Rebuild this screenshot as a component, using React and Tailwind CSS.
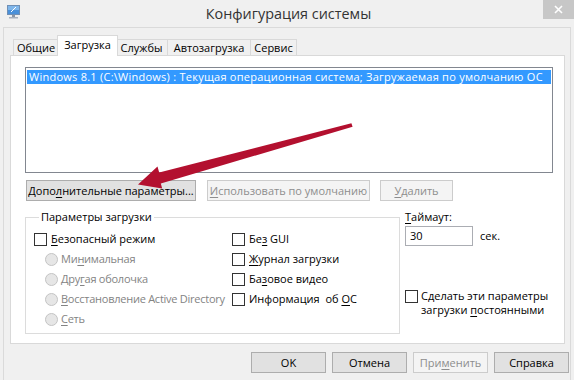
import React from "react";

const U = ({ children }) => (
  <span className="underline decoration-1 underline-offset-[2px]">{children}</span>
);

function MonitorIcon() {
  return (
    <svg width="15" height="15" viewBox="0 0 15 15">
      <rect x="1" y="1" width="13" height="10" fill="#6f8fb5" />
      <rect x="2" y="2" width="11" height="8" fill="#4a90d9" />
      <rect x="2" y="2" width="11" height="4" fill="#7fb6ea" />
      <path d="M5 8 L10 3" stroke="#fff" strokeWidth="1" />
      <rect x="6" y="11" width="3" height="2" fill="#8a95a5" />
      <rect x="3" y="13" width="9" height="1.5" fill="#a7b0bd" />
    </svg>
  );
}

function Check({ children }) {
  return (
    <div className="flex items-center h-[20px]">
      <span className="w-[13px] h-[13px] border border-[#333333] bg-white shrink-0" />
      <span className="ml-[4px] whitespace-nowrap">{children}</span>
    </div>
  );
}

function Radio({ children }) {
  return (
    <div className="flex items-center h-[20px] pl-[11px] text-[#838383]">
      <span className="w-[13px] h-[13px] rounded-full border border-[#c4c4c4] bg-[#e6e6e6] shrink-0" />
      <span className="ml-[3px] whitespace-nowrap tracking-[-0.25px]">{children}</span>
    </div>
  );
}

function Btn({ w, disabled, children }) {
  return (
    <div
      className={
        "h-[21px] flex items-center justify-center border whitespace-nowrap " +
        (disabled
          ? "border-[#cccccc] bg-[#f4f4f4] text-[#8d8d8d]"
          : "border-[#adadad] bg-[#e1e1e1] text-black")
      }
      style={{ width: w }}
    >
      {children}
    </div>
  );
}

function Tab({ w, selected, children }) {
  if (selected) {
    return (
      <div
        className="relative z-10 -mx-[2px] -mb-px h-[21px] pb-[3px] flex items-center justify-center bg-white border-t border-l border-r border-[#d9d9d9]"
        style={{ width: w }}
      >
        {children}
      </div>
    );
  }
  return (
    <div
      className="h-[16px] flex items-center justify-center bg-[#f0f0f0] border-t border-l border-r border-[#d9d9d9] -ml-px first:ml-0"
      style={{ width: w }}
    >
      {children}
    </div>
  );
}

export default function App() {
  return (
    <div className="relative w-[574px] h-[380px] bg-[#f0f0f0] overflow-hidden font-['Open_Sans','Noto_Sans',sans-serif] text-[11px] leading-[16px] text-black">
      {/* title bar */}
      <div className="flex h-[27px]">
        <div className="w-[30px] pl-[6px] pt-[4px]">
          <MonitorIcon />
        </div>
        <div className="flex-1 text-center text-[14.4px] leading-[28px] text-[#333333] pl-[4px]">
          Конфигурация системы
        </div>
        <div className="w-[31px] h-[19px] bg-[#c7c7c7] flex items-center justify-center self-start">
          <svg width="9" height="9" viewBox="0 0 9 9">
            <path d="M1 1 L8 8 M8 1 L1 8" stroke="#fff" strokeWidth="1.6" />
          </svg>
        </div>
      </div>

      {/* client area */}
      <div className="mx-[3px] h-[353px] border-l border-t border-r border-[#dadada] flex flex-col">
        <div className="pl-[6px]">
          {/* tabs */}
          <div className="mt-[7px] h-[20px] flex items-end pl-[3px]">
            <Tab w={46}>Общие</Tab>
            <Tab w={61} selected>Загрузка</Tab>
            <Tab w={53}>Службы</Tab>
            <Tab w={84}>Автозагрузка</Tab>
            <Tab w={47}>Сервис</Tab>
          </div>

          {/* panel */}
          <div className="w-[555px] h-[289px] border border-[#d9d9d9] bg-white pl-[14px] pt-[11px]">
            {/* list box */}
            <div className="w-[528px] h-[106px] border border-[#828790] pt-[2px] px-px bg-white">
              <div className="h-[14px] bg-[#3399ff] text-white leading-[14px] pl-[2px] whitespace-nowrap overflow-hidden tracking-[0.25px]">
                Windows 8.1 (C:\Windows) : Текущая операционная система; Загружаемая по умолчанию ОС
              </div>
            </div>

            {/* buttons */}
            <div className="mt-[7px] flex pl-px">
              <Btn w={170}>
                Допо<U>л</U>нительные параметры...
              </Btn>
              <div className="ml-[11px]">
                <Btn w={163} disabled>
                  <U>И</U>спользовать по умолчанию
                </Btn>
              </div>
              <div className="ml-[10px]">
                <Btn w={73} disabled>
                  <U>У</U>далить
                </Btn>
              </div>
            </div>

            {/* lower section */}
            <div className="mt-[8px] flex">
              <fieldset className="w-[375px] h-[125px] border border-[#dcdcdc] pl-[8px] pt-[4px]">
                <legend className="ml-[5px] px-[2px] leading-[16px]">Параметры загрузки</legend>
                <div className="flex">
                  <div className="w-[198px] flex flex-col">
                    <Check>
                      <U>Б</U>езопасный режим
                    </Check>
                    <Radio>
                      Ми<U>н</U>имальная
                    </Radio>
                    <Radio>
                      Дру<U>г</U>ая оболочка
                    </Radio>
                    <Radio>
                      <U>В</U>осстановление Active Directory
                    </Radio>
                    <Radio>
                      <U>С</U>еть
                    </Radio>
                  </div>
                  <div className="flex flex-col">
                    <Check>
                      Бе<U>з</U> GUI
                    </Check>
                    <Check>
                      <U>Ж</U>урнал загрузки
                    </Check>
                    <Check>
                      Ба<U>з</U>овое видео
                    </Check>
                    <Check>
                      Информация&nbsp; об <U>О</U>С
                    </Check>
                  </div>
                </div>
              </fieldset>

              <div className="ml-[5px] flex flex-col">
                <div className="h-[16px]">
                  <U>Т</U>аймаут:
                </div>
                <div className="mt-[1px] flex items-center">
                  <div className="w-[68px] h-[20px] border border-[#abadb3] bg-white pl-[4px] leading-[18px]">
                    30
                  </div>
                  <span className="ml-[7px]">сек.</span>
                </div>
                <div className="mt-[43px] flex items-start">
                  <span className="mt-[1px] w-[13px] h-[13px] border border-[#333333] bg-white shrink-0" />
                  <span className="ml-[3px] leading-[14px]">
                    Сделать эти параметры
                    <br />
                    загрузки <U>п</U>остоянными
                  </span>
                </div>
              </div>
            </div>
          </div>
        </div>

        {/* bottom buttons */}
        <div className="mt-[8px] flex justify-end gap-[6px] pr-[1px]">
          <Btn w={75}>OK</Btn>
          <Btn w={75}>Отмена</Btn>
          <Btn w={75} disabled>
            При<U>м</U>енить
          </Btn>
          <Btn w={75}>Справка</Btn>
        </div>
      </div>

      {/* red arrow overlay */}
      <svg
        className="absolute left-0 top-0 pointer-events-none"
        width="574"
        height="380"
        viewBox="0 0 574 380"
      >
        <polygon
          points="352.6,126.7 351.4,123.3 159.2,172.4 157.5,166.4 138,184.5 162.2,188.6 160.8,183.6"
          fill="#b3102f"
        />
      </svg>
    </div>
  );
}
